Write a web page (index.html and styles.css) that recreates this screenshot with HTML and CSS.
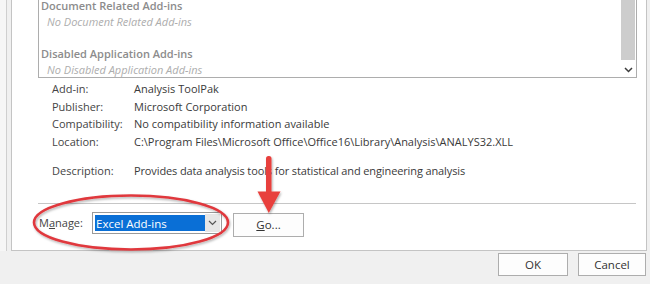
FILE: index.html
```html
<!DOCTYPE html>
<html>
<head>
<meta charset="utf-8">
<link rel="stylesheet" href="styles.css">
</head>
<body>
<div class="screen">
  <div class="main">
    <div class="nav"></div>
    <div class="panel">
      <div class="listbox">
        <div class="list-items">
          <div class="grp">Document Related Add-ins</div>
          <div class="none">No Document Related Add-ins</div>
          <div class="spacer"></div>
          <div class="grp">Disabled Application Add-ins</div>
          <div class="none">No Disabled Application Add-ins</div>
        </div>
        <div class="scrollbar">
          <div class="thumb"></div>
          <div class="sb-arrow">
            <svg width="9" height="6" viewBox="0 0 9 6"><path d="M1 1 L4.5 4.5 L8 1" fill="none" stroke="#3c3c3c" stroke-width="1.5"/></svg>
          </div>
        </div>
      </div>
      <div class="details">
        <div class="lbl">Add-in:</div><div class="val">Analysis ToolPak</div>
        <div class="lbl">Publisher:</div><div class="val">Microsoft Corporation</div>
        <div class="lbl">Compatibility:</div><div class="val">No compatibility information available</div>
        <div class="lbl">Location:</div><div class="val">C:\Program Files\Microsoft Office\Office16\Library\Analysis\ANALYS32.XLL</div>
        <div class="lbl desc">Description:</div><div class="val desc narrow">Provides data analysis tools for statistical and engineering analysis</div>
      </div>
      <div class="sep"></div>
      <div class="manage-row">
        <span class="manage-lbl">M<u>a</u>nage:</span>
        <div class="combo">
          <span class="combo-sel">Excel Add-ins</span>
          <span class="combo-btn">
            <svg width="9" height="6" viewBox="0 0 9 6"><path d="M1 1 L4.5 4.5 L8 1" fill="none" stroke="#555" stroke-width="1.2"/></svg>
          </span>
        </div>
        <div class="btn go"><u>G</u>o...</div>
      </div>
    </div>
  </div>
  <div class="footer">
    <div class="btn ok">OK</div>
    <div class="btn cancel">Cancel</div>
  </div>
  <svg class="annot" width="650" height="284" viewBox="0 0 650 284">
    <defs>
      <filter id="sh" x="-20%" y="-20%" width="140%" height="140%">
        <feDropShadow dx="1" dy="1.5" stdDeviation="1.2" flood-color="#000" flood-opacity="0.3"/>
      </filter>
    </defs>
    <ellipse cx="131" cy="222.5" rx="97" ry="27" fill="none" stroke="#e0393e" stroke-width="2.6" filter="url(#sh)"/>
    <g filter="url(#sh)" fill="#e8403d">
      <rect x="266" y="156" width="5.5" height="38" rx="2.5"/>
      <polygon points="257.5,191.5 280.5,191.5 268.8,213"/>
    </g>
  </svg>
</div>
</body>
</html>
```

FILE: styles.css
```css
* { box-sizing: border-box; }
html, body { margin: 0; padding: 0; }
body {
  background: #f0f0f0;
  font-family: "Open Sans", "Noto Sans", sans-serif;
  font-size: 11px;
  color: #333;
}
.screen {
  position: relative;
  width: 650px;
  height: 284px;
  overflow: hidden;
  display: flex;
  flex-direction: column;
}
.main {
  height: 251px;
  display: flex;
  flex: none;
}
.nav {
  width: 7px;
  background: #f6f6f6;
  border-right: 1px solid #cfcfcf;
  margin-right: 4px;
}
.panel {
  width: 636px;
  background: #fff;
  border-left: 1px solid #c4c4c4;
  border-right: 1px solid #c4c4c4;
  border-bottom: 1px solid #c4c4c4;
  overflow: hidden;
}
.listbox {
  margin: -3px 0 0 26px;
  width: 599px;
  height: 81px;
  border: 1px solid #adadad;
  display: flex;
}
.list-items {
  flex: 1;
  padding-left: 2px;
  line-height: 16px;
}
.grp {
  color: #8c8c8c;
  font-weight: 600;
  font-size: 11px;
}
.none {
  color: #adadad;
  font-style: italic;
  padding-left: 6px;
}
.spacer { height: 16px; }
.scrollbar {
  width: 14px;
  margin-right: 1px;
  display: flex;
  flex-direction: column;
}
.thumb {
  flex: 1;
  background: #cdcdcd;
  margin-bottom: 2px;
}
.sb-arrow {
  height: 15px;
  display: flex;
  align-items: center;
  justify-content: center;
  background: #fff;
}
.details {
  display: grid;
  grid-template-columns: 82px 1fr;
  margin: 2px 0 0 40px;
  line-height: 17.5px;
  color: #3a3a3a;
}
.lbl { color: #444; }
.desc { margin-top: 12px; }
.narrow { letter-spacing: -0.12px; }
.sep {
  margin: 23px 0 0 26px;
  width: 598px;
  height: 1px;
  background: #c6c6c6;
}
.manage-row {
  display: flex;
  align-items: flex-start;
  margin: 8px 0 0 27px;
}
.manage-lbl {
  width: 53px;
  line-height: 22px;
  color: #444;
}
.combo {
  width: 130px;
  height: 22px;
  border: 1px solid #9a9a9a;
  display: flex;
  padding: 1px;
  background: #fff;
}
.combo-sel {
  flex: 1;
  background: #0a6fd6;
  color: #fff;
  line-height: 17px;
  padding-left: 1px;
  font-size: 11.5px;
  margin: 1px 0 1px 1px;
}
.combo-btn {
  width: 15px;
  display: flex;
  align-items: center;
  justify-content: center;
  background: #e6e6e6;
}
.btn {
  height: 23px;
  border: 1px solid #adadad;
  background: #fdfdfd;
  display: flex;
  align-items: center;
  justify-content: center;
  color: #333;
  font-size: 11.5px;
}
.go {
  width: 71px;
  height: 24px;
  margin: 1px 0 0 11px;
}
.footer {
  flex: 1;
  display: flex;
  justify-content: flex-end;
  gap: 10px;
  padding: 2px 4px 0 0;
}
.ok { width: 70px; }
.cancel { width: 68px; }
.annot {
  position: absolute;
  left: 0;
  top: 0;
  pointer-events: none;
}
```
